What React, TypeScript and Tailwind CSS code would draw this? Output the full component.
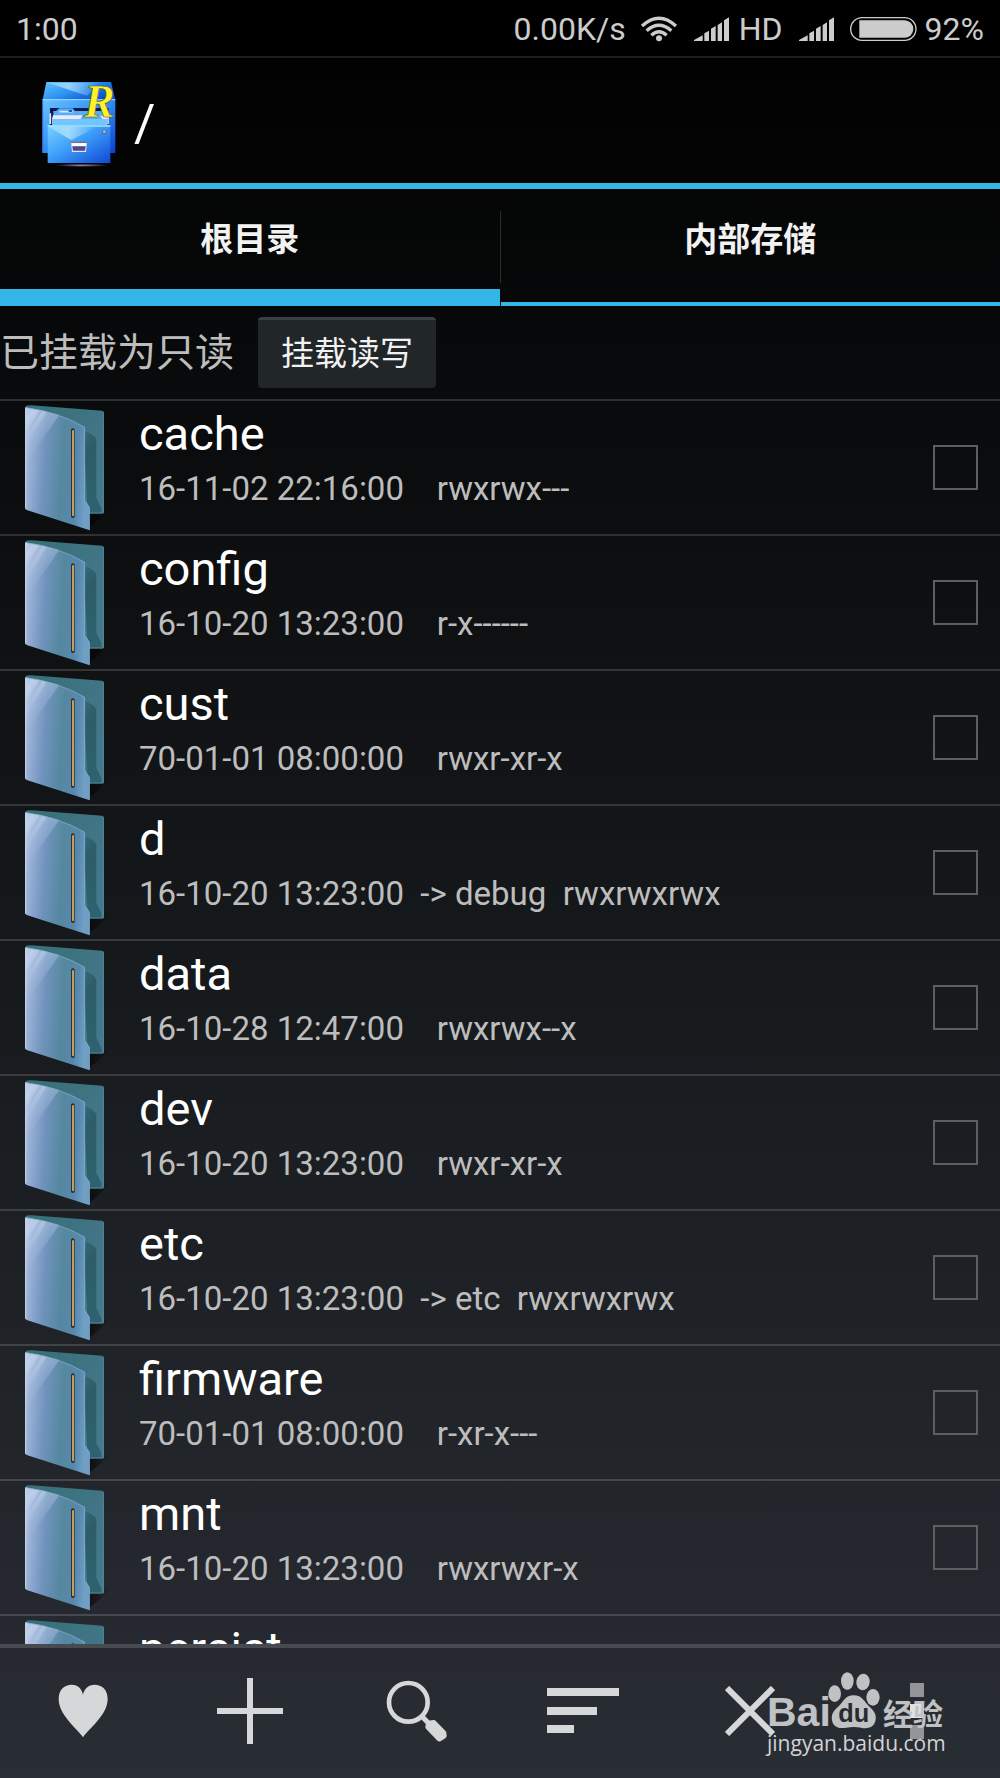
import { useState, type ReactNode } from "react";

type Entry = { name: string; date: string; perms: string; link?: string };

const entries: Entry[] = [
  { name: "cache", date: "16-11-02 22:16:00", perms: "rwxrwx---" },
  { name: "config", date: "16-10-20 13:23:00", perms: "r-x------" },
  { name: "cust", date: "70-01-01 08:00:00", perms: "rwxr-xr-x" },
  { name: "d", date: "16-10-20 13:23:00", perms: "rwxrwxrwx", link: "debug" },
  { name: "data", date: "16-10-28 12:47:00", perms: "rwxrwx--x" },
  { name: "dev", date: "16-10-20 13:23:00", perms: "rwxr-xr-x" },
  { name: "etc", date: "16-10-20 13:23:00", perms: "rwxrwxrwx", link: "etc" },
  { name: "firmware", date: "70-01-01 08:00:00", perms: "r-xr-x---" },
  { name: "mnt", date: "16-10-20 13:23:00", perms: "rwxrwxr-x" },
  { name: "persist", date: "70-01-01 08:00:00", perms: "rwxrwx--x" },
];

function WifiIcon() {
  return (
    <svg width="38" height="28" viewBox="421 40 114 84" fill="none" stroke="#cccccc" strokeWidth="10" aria-hidden="true">
      <path d="M427 73Q478 26 529 73" />
      <path d="M441 87Q478 54 515 87" />
      <path d="M455 101Q478 80 501 101" />
      <circle cx="478" cy="110" r="9" fill="#cccccc" stroke="none" />
    </svg>
  );
}

function SignalIcon() {
  return (
    <svg width="35" height="28" viewBox="580 42 105 84" fill="#cccccc" aria-hidden="true">
      <path d="M580 120V117L606 103V120Z" />
      <path d="M611 120V97L625 89V120Z" />
      <path d="M631 120V83L645 75V120Z" />
      <path d="M651 120V72L664 64V120Z" />
      <path d="M670 120V58L685 49V120Z" />
    </svg>
  );
}

function BatteryIcon() {
  return (
    <svg width="67" height="28" viewBox="1047 42 201 84" aria-hidden="true">
      <rect x="1049" y="50" width="196" height="68" rx="34" fill="none" stroke="#cccccc" strokeWidth="4" />
      <path d="M1075 58H1211A25 25 0 0 1 1211 110H1075Z" fill="#cccccc" />
    </svg>
  );
}

function CabinetLogo() {
  return (
    <svg width="77" height="88" viewBox="120 240 231 264" className="overflow-visible" role="img" aria-label="RE">
      <defs>
        <linearGradient id="cabTop" x1="0" y1="0" x2="1" y2="0.6">
          <stop offset="0" stopColor="#5fc2ff" />
          <stop offset="0.5" stopColor="#2f93f3" />
          <stop offset="1" stopColor="#0a4fd0" />
        </linearGradient>
        <linearGradient id="cabBody" x1="0" y1="0" x2="1" y2="1">
          <stop offset="0" stopColor="#6cc4ff" />
          <stop offset="0.5" stopColor="#2f8cf5" />
          <stop offset="1" stopColor="#0b41cf" />
        </linearGradient>
        <linearGradient id="cabDrawer" x1="0" y1="0" x2="1" y2="1">
          <stop offset="0" stopColor="#7dd3ff" />
          <stop offset="0.45" stopColor="#3d9ffa" />
          <stop offset="1" stopColor="#1048d4" />
        </linearGradient>
        <linearGradient id="cabShine" x1="0" y1="0" x2="1" y2="0">
          <stop offset="0" stopColor="#d4f4ff" stopOpacity="0.3" />
          <stop offset="0.4" stopColor="#d4f4ff" stopOpacity="0.6" />
          <stop offset="1" stopColor="#d4f4ff" stopOpacity="0" />
        </linearGradient>
        <radialGradient id="cabShadow">
          <stop offset="0" stopColor="#8f86ad" />
          <stop offset="1" stopColor="#8f86ad" stopOpacity="0" />
        </radialGradient>
      </defs>
      <ellipse cx="245" cy="496" rx="80" ry="5" fill="url(#cabShadow)" />
      <path d="M139 246H333L346 299H128Z" fill="url(#cabTop)" />
      <path d="M142 248H300L262 287Z" fill="url(#cabShine)" />
      <rect x="127" y="298" width="219" height="161" fill="url(#cabBody)" />
      <path d="M127 299H346" stroke="#9be0ff" strokeWidth="3" />
      <path d="M128 299V458" stroke="#2a66cf" strokeWidth="3" />
      <rect x="150" y="324" width="176" height="52" fill="#10174b" />
      <path d="M151 340V372M324 340V372" stroke="#e7e7ff" strokeWidth="5" />
      <path d="M168 333L178 325H218L225 333H320V375H160V333Z" fill="#56aefa" />
      <path d="M178 335H218" stroke="#cfeaff" strokeWidth="5" />
      <rect x="206" y="330" width="10" height="6" fill="#1959c8" />
      <path d="M159 346H247L242 357H156ZM300 347H320L323 357H308Z" fill="#eee9ff" />
      <path d="M156 357H323V375H156Z" fill="#74c4ff" />
      <rect x="143" y="375" width="188" height="114" fill="url(#cabDrawer)" />
      <path d="M143 378H331" stroke="#a6e5ff" strokeWidth="4" />
      <path d="M146 381H290L214 420Z" fill="url(#cabShine)" />
      <circle cx="313" cy="396" r="7" fill="#5a6c96" />
      <circle cx="313" cy="395" r="4" fill="#b9bdc8" />
      <path d="M213 426H261L258 456H216Z" fill="#e8e2f4" />
      <path d="M217 430H257V438H217Z" fill="#ffffff" />
      <path d="M217 439H257L255 452H219Z" fill="#4b4a8b" />
      <path d="M213 427H261" stroke="#6a5b58" strokeWidth="3" />
      <text
        x="252"
        y="350"
        fill="#fff22d"
        stroke="#4b5a1c"
        strokeWidth="2"
        className="font-['Liberation_Serif',serif] text-[138px] font-bold italic"
      >
        R
      </text>
    </svg>
  );
}

function FolderDefs() {
  return (
    <svg className="absolute h-0 w-0" aria-hidden="true">
      <defs>
        <linearGradient id="folderFront" x1="0" y1="0" x2="1" y2="0.12">
          <stop offset="0" stopColor="#b9c9e6" />
          <stop offset="0.1" stopColor="#9db2d8" />
          <stop offset="0.35" stopColor="#7093bd" />
          <stop offset="0.62" stopColor="#55889f" />
          <stop offset="0.85" stopColor="#5788ad" />
          <stop offset="1" stopColor="#6f9fc4" />
        </linearGradient>
        <linearGradient id="folderBack" x1="0" y1="0" x2="1" y2="1">
          <stop offset="0" stopColor="#347076" />
          <stop offset="0.6" stopColor="#437587" />
          <stop offset="1" stopColor="#467a8d" />
        </linearGradient>
        <linearGradient id="folderGlow" x1="0" y1="0" x2="0.1" y2="1">
          <stop offset="0" stopColor="#d5e2f7" stopOpacity="0.4" />
          <stop offset="0.7" stopColor="#d5e2f7" stopOpacity="0.08" />
          <stop offset="1" stopColor="#d5e2f7" stopOpacity="0" />
        </linearGradient>
        <linearGradient id="folderShade" x1="0" y1="0" x2="1" y2="0">
          <stop offset="0" stopColor="#000000" stopOpacity="0.6" />
          <stop offset="1" stopColor="#000000" stopOpacity="0" />
        </linearGradient>
        <linearGradient id="folderInner" x1="0" y1="0" x2="0.3" y2="1">
          <stop offset="0" stopColor="#2c5d69" stopOpacity="0.5" />
          <stop offset="0.3" stopColor="#2c5d69" />
          <stop offset="1" stopColor="#2f626e" />
        </linearGradient>
      </defs>
    </svg>
  );
}

function FolderIcon() {
  return (
    <svg width="90" height="132" viewBox="60 30 270 396" className="shrink-0" aria-hidden="true">
      <path d="M268 370L330 352L300 385L270 408Z" fill="url(#folderShade)" />
      <path d="M77 46Q80 42 95 43L306 59Q312 60 312 65V364Q312 368 307 368H200L77 200Z" fill="url(#folderBack)" />
      <path d="M250 120Q280 126 289 146V320L304 352V364H262V340Z" fill="url(#folderInner)" />
      <path d="M310 64V365" stroke="#5090a5" strokeWidth="2" />
      <path d="M76 49Q175 62 255 108V328L269 348V418L80 357Q76 355 76 352Z" fill="url(#folderFront)" />
      <path d="M78 51Q130 57 178 72L78 215Z" fill="url(#folderGlow)" />
      <path d="M96 54L118 57L78 120V84ZM127 59L140 62L78 165V142Z" fill="url(#folderGlow)" />
      <path d="M77 50V353" stroke="#cbdbee" strokeWidth="3" />
      <path d="M77 50Q175 63 254 109V329L268 349V416" fill="none" stroke="#86aecb" strokeWidth="2" />
      <rect x="213" y="112" width="11" height="269" rx="5" fill="#2b3034" />
      <rect x="216" y="117" width="6" height="259" rx="3" fill="#c29e62" />
    </svg>
  );
}

function Row({ entry }: { entry: Entry }) {
  const id = `pick-${entry.name}`;
  return (
    <li className="flex h-[135px] items-start border-b-2 border-white/15 pr-[22px] pl-5">
      <FolderIcon />
      <label htmlFor={id} className="ml-[29px] flex min-w-0 flex-1 flex-col gap-2 pt-[5px]">
        <span className="text-[47px] leading-[56px] text-white">{entry.name}</span>
        <span className="text-[33px] leading-[38px] whitespace-pre text-[#bdbdbd]">
          {entry.date}
          {entry.link ? `  -> ${entry.link}  ` : "    "}
          {entry.perms}
        </span>
      </label>
      <input
        id={id}
        type="checkbox"
        className="mt-11 size-[45px] shrink-0 appearance-none border-2 border-[#5c5e60] checked:bg-[#33b5e5]"
      />
    </li>
  );
}

function ToolButton({ label, children }: { label: string; children: ReactNode }) {
  return (
    <button type="button" aria-label={label} className="flex items-center justify-center pb-1">
      {children}
    </button>
  );
}

function Toolbar() {
  return (
    <nav className="relative grid h-[134px] shrink-0 grid-cols-6 border-t-4 border-[#474b50]">
      <ToolButton label="收藏">
        <svg width="50" height="54" viewBox="175 252 150 162" fill="#d6d7d9">
          <path d="M250 412C232 385 177 345 177 297C177 268 195 254 216 254C236 254 247 268 250 284C253 268 265 254 285 254C306 254 324 268 324 297C324 345 268 385 250 412Z" />
        </svg>
      </ToolButton>
      <ToolButton label="新建">
        <svg width="66" height="66" viewBox="0 0 66 66" stroke="#d6d7d9" strokeWidth="6">
          <path d="M33 0V66M0 33H66" />
        </svg>
      </ToolButton>
      <ToolButton label="搜索">
        <svg width="62" height="62" viewBox="1158 241 186 186" fill="none" stroke="#d6d7d9">
          <circle cx="1225" cy="308" r="58" strokeWidth="14" />
          <path d="M1264 348L1290 375" strokeWidth="15" />
          <path d="M1287 372L1301 370L1330 400L1331 408L1318 416L1285 382Z" fill="#d6d7d9" strokeWidth="18" strokeLinejoin="round" />
        </svg>
      </ToolButton>
      <ToolButton label="排序">
        <svg width="72" height="46" viewBox="0 0 72 46" fill="#d6d7d9">
          <path d="M0 0H72V8H0ZM0 19H50V27H0ZM0 37H27V45H0Z" />
        </svg>
      </ToolButton>
      <ToolButton label="关闭">
        <svg width="50" height="50" viewBox="0 0 50 50" stroke="#d6d7d9" strokeWidth="6">
          <path d="M2 2L48 48M48 2L2 48" />
        </svg>
      </ToolButton>
      <ToolButton label="更多">
        <svg width="14" height="56" viewBox="0 0 14 56">
          <path d="M0 0H14V14H0ZM0 42H14V56H0Z" fill="#929598" />
          <path d="M0 21H14V35H0Z" fill="#e0e1e2" />
        </svg>
      </ToolButton>
      <Watermark />
    </nav>
  );
}

function Watermark() {
  return (
    <div className="pointer-events-none absolute top-6 right-[55px] flex w-[178px] flex-col">
      <div className="flex h-[57px] items-end text-[#bfc1c3]">
        <span className="w-[61px] font-['Liberation_Sans',sans-serif] text-[41px] leading-[34px] font-bold">Bai</span>
        <svg width="52" height="57" viewBox="985 215 156 171" fill="#bfc1c3" aria-hidden="true">
          <ellipse cx="1005" cy="280" rx="19" ry="25" />
          <ellipse cx="1043" cy="242" rx="19" ry="26" />
          <ellipse cx="1090" cy="245" rx="20" ry="25" transform="rotate(8 1090 245)" />
          <ellipse cx="1120" cy="291" rx="20" ry="25" />
          <path d="M1062 285C1088 285 1094 305 1108 318C1124 332 1132 345 1127 363C1121 384 1100 386 1084 382C1070 379 1055 379 1040 382C1020 386 1001 382 997 360C994 340 1003 331 1017 318C1031 305 1036 285 1062 285Z" />
          <text x="1062" y="366" textAnchor="middle" fill="#272b31" className="font-['Liberation_Sans',sans-serif] text-[76px] font-bold">
            du
          </text>
        </svg>
        <span className="ml-[3px] font-['Noto_Sans_CJK_SC',sans-serif] text-[30px] leading-[34px] font-bold">经验</span>
      </div>
      <span className="font-['Open_Sans',sans-serif] text-[21px] leading-[29px] text-[#d2d3d5]">jingyan.baidu.com</span>
    </div>
  );
}

const tabs = ["根目录", "内部存储"];

export default function App() {
  const [active, setActive] = useState(0);
  return (
    <div className="flex h-screen flex-col overflow-hidden bg-[linear-gradient(#000000,#171a1d_56%,#292d34)] font-[Roboto,'Noto_Sans_CJK_SC',sans-serif] text-white">
      <FolderDefs />
      <div className="flex h-[58px] shrink-0 items-center justify-between border-b-2 border-[#1e1e1e] bg-black px-4 pt-0.5 text-[32px] leading-[40px] text-[#cccccc]">
        <span>1:00</span>
        <div className="flex items-center gap-4">
          <span className="-mr-0.5">0.00K/s</span>
          <WifiIcon />
          <div className="flex items-center gap-2.5">
            <SignalIcon />
            <span>HD</span>
          </div>
          <SignalIcon />
          <div className="flex items-center gap-2">
            <BatteryIcon />
            <span>92%</span>
          </div>
        </div>
      </div>

      <header className="flex h-[131px] shrink-0 items-center gap-[17px] border-b-6 border-[#33b5e5] pt-[7px] pl-10">
        <CabinetLogo />
        <h1 className="text-[52px] leading-[60px] font-normal">/</h1>
      </header>

      <div role="tablist" className="relative grid h-[117px] shrink-0 grid-cols-2 gap-px">
        {tabs.map((tab, i) => (
          <button
            key={tab}
            type="button"
            role="tab"
            aria-selected={active === i}
            onClick={() => setActive(i)}
            className={
              active === i
                ? "flex items-start justify-center border-b-[17px] border-[#33b5e5] pt-[26px] text-[33px] leading-[50px] font-bold text-[#f2f2f2]"
                : "flex items-start justify-center border-b-4 border-[#33b5e5] pt-[26px] text-[33px] leading-[50px] font-bold text-[#f2f2f2]"
            }
          >
            {tab}
          </button>
        ))}
        <span className="absolute top-[22px] left-1/2 h-[72px] w-px bg-[#2b2b2c]" />
      </div>

      <div className="flex h-[95px] shrink-0 items-center gap-6 border-b-2 border-white/15">
        <p className="text-[39px] leading-[60px] text-[#bdbdbd]">已挂载为只读</p>
        <button
          type="button"
          className="h-[71px] rounded border-t-3 border-[#3a3f43] bg-[#212629] px-[23px] text-[33px] leading-[60px] text-[#f2f2f2]"
        >
          挂载读写
        </button>
      </div>

      <main className="min-h-0 flex-1 overflow-hidden">
        <ul>
          {entries.map((entry) => (
            <Row key={entry.name} entry={entry} />
          ))}
        </ul>
      </main>

      <Toolbar />
    </div>
  );
}
